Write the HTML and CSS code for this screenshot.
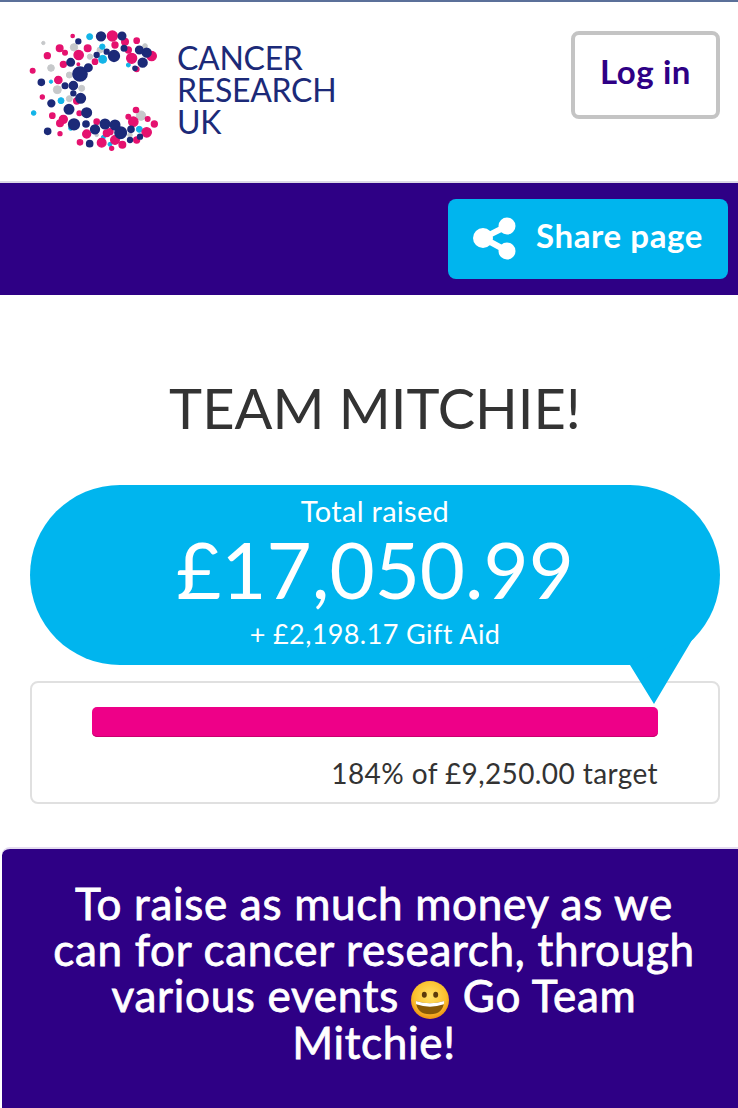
FILE: index.html
```html
<!DOCTYPE html>
<html lang="en">
<head>
    <meta charset="UTF-8">
    <meta name="viewport" content="width=device-width, initial-scale=1.0">
    <title>Team Mitchie!</title>
    <link rel="stylesheet" href="styles.css">
</head>
<body>
    <header class="site-header">
        <div class="logo">
            <svg class="logo-mark" viewBox="75 75 420 390" width="140" height="130">
                <g class="dots-grey">
                    <circle cx="130" cy="129" r="5"/><circle cx="222" cy="142" r="11"/><circle cx="153" cy="204" r="10"/><circle cx="172" cy="269" r="12"/><circle cx="208" cy="225" r="9"/><circle cx="245" cy="265" r="9"/><circle cx="208" cy="296" r="9"/><circle cx="423" cy="347" r="14"/><circle cx="270" cy="170" r="8"/><circle cx="300" cy="150" r="9"/><circle cx="435" cy="138" r="7"/><circle cx="390" cy="405" r="7"/><circle cx="290" cy="405" r="5"/><circle cx="247" cy="290" r="4"/>
                </g>
                <g class="dots-cyan">
                    <circle cx="269" cy="110" r="9"/><circle cx="307" cy="140" r="8"/><circle cx="308" cy="178" r="12"/><circle cx="153" cy="245" r="5"/><circle cx="183" cy="302" r="9"/><circle cx="101" cy="339" r="7"/><circle cx="385" cy="195" r="6"/><circle cx="418" cy="388" r="9"/><circle cx="330" cy="433" r="6"/><circle cx="310" cy="412" r="6"/><circle cx="212" cy="385" r="6"/>
                </g>
                <g class="dots-pink">
                    <circle cx="337" cy="108" r="15"/><circle cx="218" cy="108" r="5"/><circle cx="179" cy="145" r="10"/><circle cx="142" cy="167" r="9"/><circle cx="236" cy="165" r="14"/><circle cx="263" cy="145" r="10"/><circle cx="195" cy="158" r="7"/><circle cx="190" cy="193" r="9"/><circle cx="98" cy="212" r="7"/><circle cx="175" cy="240" r="11"/><circle cx="127" cy="291" r="6"/><circle cx="157" cy="347" r="8"/><circle cx="190" cy="358" r="12"/><circle cx="180" cy="370" r="10"/><circle cx="240" cy="427" r="8"/><circle cx="180" cy="401" r="6"/><circle cx="305" cy="428" r="13"/><circle cx="345" cy="420" r="13"/><circle cx="367" cy="434" r="10"/><circle cx="335" cy="445" r="6"/><circle cx="440" cy="397" r="14"/><circle cx="463" cy="372" r="9"/><circle cx="443" cy="357" r="7"/><circle cx="408" cy="330" r="8"/><circle cx="400" cy="365" r="14"/><circle cx="395" cy="175" r="15"/><circle cx="455" cy="168" r="14"/><circle cx="410" cy="208" r="7"/><circle cx="375" cy="125" r="10"/><circle cx="410" cy="122" r="8"/><circle cx="285" cy="185" r="8"/><circle cx="238" cy="340" r="7"/><circle cx="230" cy="303" r="9"/><circle cx="260" cy="402" r="12"/><circle cx="320" cy="400" r="10"/><circle cx="410" cy="420" r="9"/><circle cx="290" cy="365" r="8"/><circle cx="235" cy="193" r="4"/><circle cx="345" cy="135" r="9"/><circle cx="385" cy="150" r="9"/><circle cx="330" cy="395" r="9"/><circle cx="385" cy="350" r="7"/>
                </g>
                <g class="dots-navy">
                    <circle cx="303" cy="109" r="13"/><circle cx="366" cy="108" r="11"/><circle cx="235" cy="124" r="7"/><circle cx="342" cy="168" r="16"/><circle cx="440" cy="158" r="13"/><circle cx="418" cy="150" r="11"/><circle cx="428" cy="188" r="13"/><circle cx="212" cy="187" r="11"/><circle cx="240" cy="222" r="21"/><circle cx="265" cy="203" r="11"/><circle cx="220" cy="257" r="12"/><circle cx="195" cy="257" r="8"/><circle cx="124" cy="247" r="9"/><circle cx="242" cy="295" r="14"/><circle cx="154" cy="310" r="10"/><circle cx="207" cy="328" r="14"/><circle cx="260" cy="338" r="14"/><circle cx="222" cy="373" r="16"/><circle cx="258" cy="372" r="9"/><circle cx="285" cy="388" r="13"/><circle cx="315" cy="372" r="14"/><circle cx="345" cy="375" r="14"/><circle cx="362" cy="398" r="17"/><circle cx="393" cy="388" r="9"/><circle cx="143" cy="394" r="9"/><circle cx="269" cy="431" r="9"/><circle cx="390" cy="420" r="7"/><circle cx="420" cy="410" r="7"/><circle cx="372" cy="145" r="8"/><circle cx="320" cy="155" r="7"/><circle cx="290" cy="165" r="7"/><circle cx="405" cy="205" r="6"/><circle cx="220" cy="280" r="7"/>
                </g>
            </svg>
            <div class="logo-text">CANCER<br>RESEARCH<br>UK</div>
        </div>
        <a class="login-btn" href="#"><span class="btn-label">Log in</span></a>
    </header>

    <div class="share-bar">
        <a class="share-btn" href="#">
            <svg class="share-icon" viewBox="0 0 44 44" width="44" height="44">
                <path d="M35 10 L11 22 L35 35" fill="none" stroke="#fff" stroke-width="6"/>
                <circle cx="35" cy="10" r="8.5" fill="#fff"/>
                <circle cx="11" cy="22" r="10" fill="#fff"/>
                <circle cx="35" cy="35" r="8.5" fill="#fff"/>
            </svg>
            <span class="btn-label">Share page</span>
        </a>
    </div>

    <main class="content">
        <h1 class="page-title">TEAM MITCHIE!</h1>

        <div class="bubble">
            <div class="bubble-label">Total raised</div>
            <div class="bubble-total">£17,050.99</div>
            <div class="bubble-aid">+ £2,198.17 Gift Aid</div>
            <div class="bubble-tail"></div>
        </div>

        <div class="progress-box">
            <div class="progress-bar"></div>
            <div class="progress-text">184% of £9,250.00 target</div>
        </div>
    </main>

    <section class="story">
        <p>To raise as much money as we can for cancer research, through various events
            <svg class="emoji" viewBox="0 0 40 40" width="38" height="38">
                <defs>
                    <radialGradient id="face" cx="50%" cy="40%" r="60%">
                        <stop offset="0%" stop-color="#ffe169"/>
                        <stop offset="70%" stop-color="#fbc02d"/>
                        <stop offset="100%" stop-color="#ee8f12"/>
                    </radialGradient>
                </defs>
                <circle cx="20" cy="20" r="20" fill="url(#face)"/>
                <ellipse cx="14" cy="14.5" rx="2.6" ry="3.2" fill="#5b3a0a"/>
                <ellipse cx="26" cy="14.5" rx="2.6" ry="3.2" fill="#5b3a0a"/>
                <path d="M5 21 Q20 26 35 21 Q34 35 20 35 Q6 35 5 21Z" fill="#8a5a06"/>
                <path d="M5 21 Q20 26 35 21 L34.6 24.5 Q20 29.5 5.4 24.5Z" fill="#fff"/>
            </svg>
            Go Team Mitchie!</p>
    </section>
</body>
</html>
```

FILE: styles.css
```css
html, body {
    margin: 0;
    padding: 0;
}
body {
    font-family: Lato, "Noto Sans", sans-serif;
    background-color: #fff;
    color: #333;
    height: 1108px;
    overflow: hidden;
    display: flex;
    flex-direction: column;
}
a {
    text-decoration: none;
}
.site-header {
    display: flex;
    justify-content: space-between;
    align-items: flex-start;
    height: 179px;
    border-top: 2px solid #5b7099;
    border-bottom: 2px solid #dcd8e6;
    padding: 0 18px 0 25px;
}
.logo {
    display: flex;
    margin-top: 23px;
}
.logo-mark {
    display: block;
    filter: blur(0.4px);
}
.dots-grey {
    fill: #c6c8ca;
    stroke: #c6c8ca;
    stroke-width: 3;
}
.dots-cyan {
    fill: #12b4e8;
    stroke: #12b4e8;
    stroke-width: 3;
}
.dots-pink {
    fill: #e5126f;
    stroke: #e5126f;
    stroke-width: 4;
}
.dots-navy {
    fill: #1c2a78;
    stroke: #1c2a78;
    stroke-width: 5;
}
.logo-text {
    margin: 17px 0 0 12px;
    font-size: 32px;
    line-height: 32px;
    font-weight: 400;
    color: #1c2a78;
    letter-spacing: -0.3px;
}
.login-btn {
    margin-top: 29px;
    width: 149px;
    height: 88px;
    box-sizing: border-box;
    border: 4px solid #c4c4c4;
    border-radius: 8px;
    display: flex;
    align-items: center;
    justify-content: center;
    font-size: 33px;
    font-weight: 700;
    letter-spacing: 0.6px;
    color: #2e0085;
}
.login-btn .btn-label {
    margin-bottom: 8px;
}
.btn-label {
    margin-bottom: 6px;
}
.share-bar {
    height: 112px;
    box-sizing: border-box;
    background-color: #2e0085;
    padding: 16px 10px 0 0;
    display: flex;
    justify-content: flex-end;
}
.share-btn {
    width: 280px;
    height: 80px;
    box-sizing: border-box;
    background-color: #00b5ee;
    border-radius: 8px;
    padding: 0 0 2px 24px;
    display: flex;
    align-items: center;
    gap: 20px;
    font-size: 33px;
    font-weight: 700;
    letter-spacing: 0.6px;
    color: #fff;
}
.content {
    padding: 0 18px 0 30px;
    height: 552px;
    box-sizing: border-box;
}
.page-title {
    margin: 78px 0 0;
    height: 72px;
    font-size: 56px;
    line-height: 70px;
    font-weight: 400;
    text-align: center;
    color: #333;
}
.bubble {
    position: relative;
    margin-top: 40px;
    height: 180px;
    border-radius: 90px;
    background-color: #00b5ee;
    color: #fff;
    text-align: center;
}
.bubble-label {
    padding-top: 8px;
    font-size: 29px;
    line-height: 36px;
    letter-spacing: 0.3px;
}
.bubble-total {
    font-size: 78px;
    line-height: 80px;
}
.bubble-aid {
    padding-top: 8px;
    font-size: 27px;
    line-height: 34px;
    letter-spacing: 0.4px;
}
.bubble-tail {
    position: absolute;
    left: 600px;
    top: 150px;
    width: 66px;
    height: 70px;
    background-color: #00b5ee;
    clip-path: polygon(0 30px, 24px 69px, 62px 5px, 66px 0);
}
.progress-box {
    margin-top: 16px;
    height: 123px;
    box-sizing: border-box;
    border: 2px solid #e0e0e0;
    border-radius: 8px;
    padding: 24px 60px 0;
}
.progress-bar {
    height: 30px;
    background-color: #ee0088;
    border-radius: 5px;
    box-shadow: inset 0 -1px 0 #c8006e;
}
.progress-text {
    margin-top: 19px;
    font-size: 28px;
    line-height: 34px;
    letter-spacing: 0.4px;
    text-align: right;
    color: #333;
}
.story {
    flex: 1;
    margin: 0 0 0 2px;
    border-top: 2px solid #e4dcef;
    border-top-left-radius: 8px;
    background-color: #2e0085;
    color: #fff;
    padding: 31px 36px 0 44px;
    text-align: center;
}
.story p {
    margin: 0;
    font-size: 44px;
    line-height: 46px;
    letter-spacing: 0.7px;
    -webkit-text-stroke: 0.8px #fff;
}
.emoji {
    vertical-align: -7px;
    margin-right: 2px;
}
```
